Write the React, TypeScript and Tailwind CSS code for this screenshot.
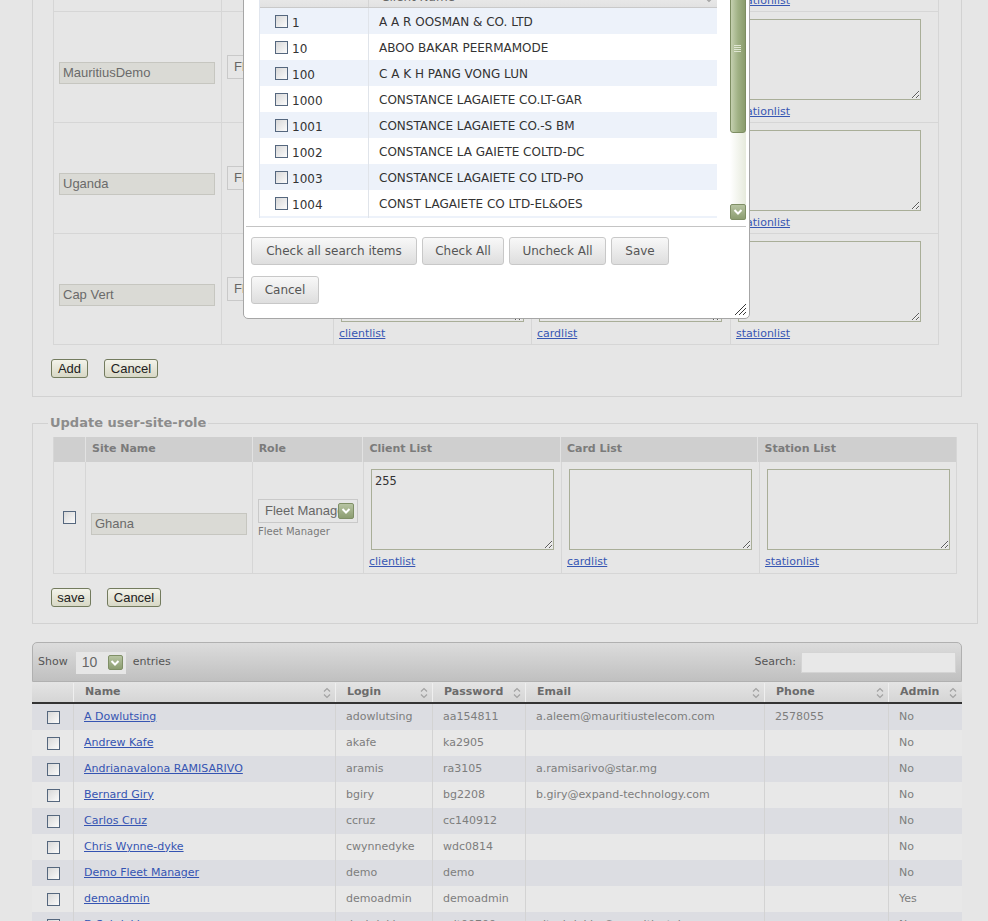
import type { ReactNode } from 'react'

const ADD_ROWS = ['Mozambique', 'MauritiusDemo', 'Uganda', 'Cap Vert']

const CLIENTS: [string, string][] = [
  ['1', 'A A R OOSMAN & CO. LTD'],
  ['10', 'ABOO BAKAR PEERMAMODE'],
  ['100', 'C A K H PANG VONG LUN'],
  ['1000', 'CONSTANCE LAGAIETE CO.LT-GAR'],
  ['1001', 'CONSTANCE LAGAIETE CO.-S BM'],
  ['1002', 'CONSTANCE LA GAIETE COLTD-DC'],
  ['1003', 'CONSTANCE LAGAIETE CO LTD-PO'],
  ['1004', 'CONST LAGAIETE CO LTD-EL&OES'],
  ['1005', 'CONSTANCE LAGAIETE CO LTD-FL']
]

type User = {
  name: string
  login: string
  password: string
  email: string
  phone: string
  admin: string
}

const USERS: User[] = [
  { name: 'A Dowlutsing', login: 'adowlutsing', password: 'aa154811', email: 'a.aleem@mauritiustelecom.com', phone: '2578055', admin: 'No' },
  { name: 'Andrew Kafe', login: 'akafe', password: 'ka2905', email: '', phone: '', admin: 'No' },
  { name: 'Andrianavalona RAMISARIVO', login: 'aramis', password: 'ra3105', email: 'a.ramisarivo@star.mg', phone: '', admin: 'No' },
  { name: 'Bernard Giry', login: 'bgiry', password: 'bg2208', email: 'b.giry@expand-technology.com', phone: '', admin: 'No' },
  { name: 'Carlos Cruz', login: 'ccruz', password: 'cc140912', email: '', phone: '', admin: 'No' },
  { name: 'Chris Wynne-dyke', login: 'cwynnedyke', password: 'wdc0814', email: '', phone: '', admin: 'No' },
  { name: 'Demo Fleet Manager', login: 'demo', password: 'demo', email: '', phone: '', admin: 'No' },
  { name: 'demoadmin', login: 'demoadmin', password: 'demoadmin', email: '', phone: '', admin: 'Yes' },
  { name: 'D Sobdakim', login: 'dsobdakim', password: 'adt00700', email: 'nitsobdakim@mauritiustelecom.com', phone: '', admin: 'No' },
  { name: 'Eric Lagesse', login: 'elagesse', password: 'el1204', email: '', phone: '', admin: 'No' }
]

function Checkbox({ className = '' }: { className?: string }) {
  return (
    <span
      className={`inline-block h-[13px] w-[13px] shrink-0 border border-[#55677e] bg-linear-to-br from-[#d8d8d8] to-[#fbfbfb] ${className}`}
    />
  )
}

function GreenArrow({ className = '' }: { className?: string }) {
  return (
    <span
      className={`flex items-center justify-center rounded-[2px] border border-[#7f8f66] bg-linear-to-b from-[#b7c4a2] to-[#8c9d71] ${className}`}
    >
      <svg width="10" height="8" viewBox="0 0 10 8">
        <path d="M1.5 2 L5 5.5 L8.5 2" fill="none" stroke="#ffffff" strokeWidth="2" />
      </svg>
    </span>
  )
}

function SortIcon() {
  return (
    <svg width="8" height="12" viewBox="0 0 8 12" className="shrink-0">
      <path d="M1 4.5 L4 1.5 L7 4.5" fill="none" stroke="#a3a3a3" strokeWidth="1.2" />
      <path d="M1 7.5 L4 10.5 L7 7.5" fill="none" stroke="#a3a3a3" strokeWidth="1.2" />
    </svg>
  )
}

function OldButton({ children, className }: { children: ReactNode; className: string }) {
  return (
    <button
      type="button"
      className={`h-[19px] rounded-[3px] border border-[#737b5e] bg-linear-to-b from-[#f3f3ea] to-[#d8d8c6] font-['Liberation_Sans',sans-serif] text-[13px] leading-[16px] text-[#222] ${className}`}
    >
      {children}
    </button>
  )
}

function DialogButton({ children, className }: { children: ReactNode; className: string }) {
  return (
    <button
      type="button"
      className={`h-[28px] rounded-[3px] border border-[#c8c8c8] bg-linear-to-b from-[#f8f8f8] to-[#dedede] text-[12px] text-[#555] ${className}`}
    >
      {children}
    </button>
  )
}

function SiteInput({ value }: { value: string }) {
  return (
    <div className="flex h-[22px] w-[156px] items-center border border-[#c6c6c0] bg-[#dadad5] pl-[3px] font-['Liberation_Sans',sans-serif] text-[13px] text-[#6a6a6a]">
      {value}
    </div>
  )
}

function RoleSelect() {
  return (
    <div className="flex h-[24px] w-[100px] items-center justify-between overflow-hidden border border-[#c9c9c9] bg-[#e6e6e6] pl-[6px] pr-[3px] font-['Liberation_Sans',sans-serif] text-[13px] text-[#666]">
      <span className="w-[74px] overflow-hidden whitespace-nowrap">Fleet Manager</span>
      <GreenArrow className="h-[16px] w-[16px]" />
    </div>
  )
}

function ListCell({ width, link, value = '' }: { width: string; link: string; value?: string }) {
  return (
    <div className={`${width} shrink-0 border-l border-[#d6d6d6] pl-[7px] pt-[7px]`}>
      <textarea
        readOnly
        defaultValue={value}
        className="block h-[81px] w-[183px] border border-[#a9ae98] bg-transparent px-[3px] py-[2px] font-['DejaVu_Sans_Mono',monospace] text-[12px] text-[#333] outline-none"
      />
      <a href="#" className="-ml-[2px] mt-[5px] inline-block text-[11px] leading-[14px] text-[#3757b3] underline">
        {link}
      </a>
    </div>
  )
}

function AddRow({ site }: { site: string }) {
  return (
    <div className="flex h-[111px] border-b border-[#d6d6d6]">
      <div className="w-[167px] shrink-0 pl-[5px] pt-[50px]">
        <SiteInput value={site} />
      </div>
      <div className="w-[112px] shrink-0 border-l border-[#d6d6d6] pl-[5px] pt-[43px]">
        <RoleSelect />
      </div>
      <ListCell width="w-[198px]" link="clientlist" />
      <ListCell width="w-[199px]" link="cardlist" />
      <ListCell width="w-[210px]" link="stationlist" />
    </div>
  )
}

function ClientDialog() {
  return (
    <div className="absolute left-[243px] top-[-30px] h-[349px] w-[507px] rounded-b-[5px] border border-[#a6a6a6] bg-white pt-[15px] text-[12px] text-[#333]">
      <div className="ml-[15px] flex h-[234px]">
        <div className="h-[232px] w-[458px] overflow-hidden border-l border-[#e1e6ee]">
          <div className="flex h-[22px] border-b border-[#c9c9c9] bg-linear-to-b from-[#f2f2f2] to-[#e2e2e2] text-[#666]">
            <div className="w-[108px] shrink-0" />
            <div className="flex flex-1 items-center justify-between border-l border-[#d4d4d4] pl-[12px] pr-[4px]">
              <span>Client Name</span>
              <SortIcon />
            </div>
          </div>
          {CLIENTS.map(([id, name], index) => (
            <div key={id} className={`flex h-[26px] ${index % 2 === 0 ? 'bg-[#edf2fa]' : 'bg-white'}`}>
              <div className="flex w-[108px] shrink-0 items-start pl-[15px]">
                <Checkbox className="mt-[7px]" />
                <span className="ml-[4px] mt-[7px] leading-[16px]">{id}</span>
              </div>
              <div className="flex flex-1 items-center border-l border-[#e0e4ea] pl-[10px] pt-px">{name}</div>
            </div>
          ))}
        </div>
        <div className="ml-[13px] flex h-[234px] w-[16px] flex-col bg-linear-to-r from-white to-[#e6eadc]">
          <div className="relative h-[147px] rounded-b-[3px] border border-[#7d8d62] bg-linear-to-r from-[#c5d0b0] via-[#a0b185] to-[#8a9c6c]">
            <div className="absolute left-[3px] top-[58px] flex w-[7px] flex-col gap-[1px]">
              <span className="h-px bg-[#dfe6d2]" />
              <span className="h-px bg-[#dfe6d2]" />
              <span className="h-px bg-[#dfe6d2]" />
              <span className="h-px bg-[#dfe6d2]" />
            </div>
          </div>
          <div className="flex-1" />
          <GreenArrow className="h-[16px] w-[16px]" />
        </div>
      </div>
      <div className="ml-[2px] mt-[6px] w-[500px] border-t border-[#c4c4c4]" />
      <div className="ml-[7px] mt-[10px] flex gap-[5px]">
        <DialogButton className="w-[166px]">Check all search items</DialogButton>
        <DialogButton className="w-[82px]">Check All</DialogButton>
        <DialogButton className="w-[97px]">Uncheck All</DialogButton>
        <DialogButton className="w-[58px]">Save</DialogButton>
      </div>
      <div className="ml-[7px] mt-[11px]">
        <DialogButton className="w-[68px]">Cancel</DialogButton>
      </div>
      <svg width="13" height="13" viewBox="0 0 13 13" className="absolute bottom-[2px] right-[2px]">
        <path d="M12 1 L1 12 M12 5 L5 12 M12 9 L9 12" stroke="#3a3a3a" strokeWidth="1" />
      </svg>
    </div>
  )
}

function UpdateSection() {
  const head = 'flex items-center border-l border-[#e2e2e2] pl-[6px]'
  return (
    <fieldset className="ml-[32px] mt-[18px] w-[946px] border border-[#d2d2d2] pb-[16px] pl-[20px]">
      <legend className="-ml-[5px] px-[2px] text-[13px] font-bold leading-[16px] text-[#8c8c8c]">Update user-site-role</legend>
      <div className="mt-[6px] w-[904px] border-x border-b border-[#d6d6d6]">
        <div className="flex h-[25px] bg-[#cfcfcf] font-bold text-[#7b7b7b]">
          <div className="w-[31px] shrink-0" />
          <div className={`${head} w-[167px]`}>Site Name</div>
          <div className={`${head} w-[111px]`}>Role</div>
          <div className={`${head} w-[198px]`}>Client List</div>
          <div className={`${head} w-[198px]`}>Card List</div>
          <div className={`${head} w-[199px]`}>Station List</div>
        </div>
        <div className="flex h-[111px]">
          <div className="w-[31px] shrink-0 pl-[9px] pt-[49px]">
            <Checkbox />
          </div>
          <div className="w-[167px] shrink-0 border-l border-[#d6d6d6] pl-[5px] pt-[51px]">
            <SiteInput value="Ghana" />
          </div>
          <div className="w-[111px] shrink-0 border-l border-[#d6d6d6] pl-[5px] pt-[37px]">
            <RoleSelect />
            <div className="mt-[2px] text-[10px] leading-[14px] text-[#7a7a7a]">Fleet Manager</div>
          </div>
          <ListCell width="w-[198px]" link="clientlist" value="255" />
          <ListCell width="w-[198px]" link="cardlist" />
          <ListCell width="w-[199px]" link="stationlist" />
        </div>
      </div>
      <div className="-ml-[2px] mt-[14px] flex gap-[16px]">
        <OldButton className="w-[40px]">save</OldButton>
        <OldButton className="w-[54px]">Cancel</OldButton>
      </div>
    </fieldset>
  )
}

function UsersTable() {
  const cols = ['w-[262px]', 'w-[97px]', 'w-[93px]', 'w-[239px]', 'w-[124px]', 'w-[73px]']
  const headers = ['Name', 'Login', 'Password', 'Email', 'Phone', 'Admin']
  return (
    <div className="ml-[32px] mt-[18px] w-[930px]">
      <div className="flex h-[40px] items-center justify-between rounded-t-[5px] border border-[#b0b0b0] bg-linear-to-b from-[#dcdcdc] to-[#c0c0c0] pl-[5px] pr-[5px] pt-px text-[#555]">
        <div className="flex items-center">
          <span>Show</span>
          <div className="ml-[8px] flex h-[22px] w-[50px] items-center justify-between bg-[#e6e6e6] pl-[6px] pr-[3px] font-['Liberation_Sans',sans-serif] text-[14px] text-[#666]">
            <span>10</span>
            <GreenArrow className="h-[15px] w-[15px]" />
          </div>
          <span className="ml-[7px]">entries</span>
        </div>
        <div className="flex items-center">
          <span>Search:</span>
          <div className="ml-[5px] h-[21px] w-[155px] border border-[#d4d4d4] bg-[#e8e8e8]" />
        </div>
      </div>
      <div className="flex h-[22px] border-b-2 border-[#333] bg-linear-to-b from-[#e4e4e4] to-[#d5d5d5] pl-px pt-px font-bold text-[#6b6b6b]">
        <div className="w-[40px] shrink-0" />
        {headers.map((header, i) => (
          <div key={header} className={`${cols[i]} flex shrink-0 items-center justify-between border-l border-[#efefef] pl-[11px] pr-[4px]`}>
            <span>{header}</span>
            <SortIcon />
          </div>
        ))}
      </div>
      {USERS.map((user, index) => (
        <div key={user.login} className={`flex h-[26px] pl-px text-[#7d7d7d] ${index % 2 === 0 ? 'bg-[#dcdde2]' : 'bg-[#e8e8e8]'}`}>
          <div className="flex w-[40px] shrink-0 items-center pl-[14px]">
            <Checkbox />
          </div>
          <div className={`${cols[0]} flex shrink-0 items-center border-l border-[#d3d3d3] pl-[10px]`}>
            <a href="#" className="text-[#3554b2] underline">{user.name}</a>
          </div>
          <div className={`${cols[1]} flex shrink-0 items-center border-l border-[#d3d3d3] pl-[10px]`}>{user.login}</div>
          <div className={`${cols[2]} flex shrink-0 items-center border-l border-[#d3d3d3] pl-[10px]`}>{user.password}</div>
          <div className={`${cols[3]} flex shrink-0 items-center border-l border-[#d3d3d3] pl-[10px]`}>{user.email}</div>
          <div className={`${cols[4]} flex shrink-0 items-center border-l border-[#d3d3d3] pl-[10px]`}>{user.phone}</div>
          <div className={`${cols[5]} flex shrink-0 items-center border-l border-[#d3d3d3] pl-[10px]`}>{user.admin}</div>
        </div>
      ))}
    </div>
  )
}

export default function App() {
  return (
    <div className="relative h-[921px] w-[988px] overflow-hidden bg-[#e6e6e6] font-['DejaVu_Sans',sans-serif] text-[11px] text-[#7a7a7a]">
      {/* add user-site-role, page scrolled past its legend */}
      <div className="-mt-[99px] ml-[32px] w-[930px] border-x border-b border-[#d2d2d2] pb-[18px] pl-[20px]">
        <div className="w-[886px] border-x border-[#d6d6d6]">
          {ADD_ROWS.map(site => (
            <AddRow key={site} site={site} />
          ))}
        </div>
        <div className="-ml-[2px] mt-[14px] flex gap-[16px]">
          <OldButton className="w-[37px]">Add</OldButton>
          <OldButton className="w-[54px]">Cancel</OldButton>
        </div>
      </div>

      <UpdateSection />
      <UsersTable />

      <ClientDialog />
    </div>
  )
}
